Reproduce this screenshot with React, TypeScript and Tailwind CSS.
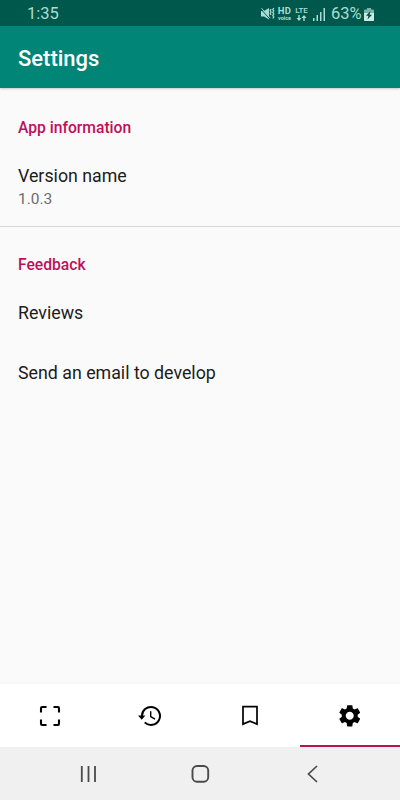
import React from "react";

function ScanIcon() {
  return (
    <svg width="24" height="24" viewBox="0 0 24 24" fill="none" stroke="currentColor" strokeWidth="2.1">
      <path d="M3 8.500V4.200Q3 3 4.200 3H8.500M15.500 3h4.300Q21 3 21 4.200V8.500M21 15.500v4.300Q21 21 19.800 21H15.500M8.500 21H4.200Q3 21 3 19.800V15.500" />
    </svg>
  );
}

function HistoryIcon() {
  return (
    <svg className="-ml-[2px]" width="26" height="24" viewBox="0 0 26 24" fill="none" stroke="currentColor">
      <path d="M6 12.500A9 9 0 1 1 8.700 18.400" strokeWidth="2" />
      <path d="M2 11.600h7.400L5.700 15.800z" fill="currentColor" stroke="none" />
      <path d="M14.700 7.300v5.200l4.300 2.700" strokeWidth="1.400" />
    </svg>
  );
}

function BookmarkIcon() {
  return (
    <svg width="24" height="24" viewBox="0 0 24 24" fill="none" stroke="currentColor" strokeWidth="1.7">
      <path d="M5 2.700h14v17.400l-7-3-7 3z" />
    </svg>
  );
}

function GearIcon() {
  return (
    <svg width="25.500" height="25.500" viewBox="0 0 24 24" fill="currentColor">
      <path d="M19.430 12.980c.04-.32.07-.64.07-.98s-.03-.66-.07-.98l2.110-1.650c.19-.15.24-.42.12-.64l-2-3.460c-.12-.22-.39-.3-.61-.22l-2.490 1c-.52-.4-1.080-.73-1.690-.98l-.38-2.650C14.460 2.180 14.250 2 14 2h-4c-.25 0-.46.18-.49.42l-.38 2.650c-.61.25-1.170.59-1.690.98l-2.490-1c-.23-.09-.49 0-.61.22l-2 3.460c-.13.22-.07.49.12.64l2.110 1.650c-.04.32-.07.65-.07.98s.03.66.07.98l-2.110 1.650c-.19.15-.24.42-.12.64l2 3.460c.12.22.39.3.61.22l2.490-1c.52.4 1.080.73 1.690.98l.38 2.650c.03.24.24.42.49.42h4c.25 0 .46-.18.49-.42l.38-2.650c.61-.25 1.170-.59 1.690-.98l2.490 1c.23.09.49 0 .61-.22l2-3.460c.12-.22.07-.49-.12-.64l-2.110-1.650zM12 15.800c-2.100 0-3.800-1.700-3.800-3.800s1.700-3.800 3.800-3.800 3.800 1.700 3.800 3.800-1.700 3.800-3.800 3.800z" />
    </svg>
  );
}

const tabs = [
  { id: "scan", Icon: ScanIcon },
  { id: "history", Icon: HistoryIcon },
  { id: "bookmarks", Icon: BookmarkIcon },
  { id: "settings", Icon: GearIcon },
];

function StatusBar() {
  return (
    <div className="flex h-[26px] shrink-0 items-center bg-[#00574b] pr-[26px] pl-[27px] text-[#a9dcd2]">
      <span className="mt-[3px] text-[16.5px] leading-none">1:35</span>
      <div className="mt-[2px] ml-auto flex items-center">
        <svg width="14" height="14" viewBox="0 0 14 14" fill="currentColor">
          <path d="M0 4h3l5-3v11.500L3 9.500H0z" />
          <path d="M0 2.200l9 10" stroke="#00574b" strokeWidth="1" />
          <path d="M.5 1.200l8.800 10" stroke="currentColor" strokeWidth="1" />
          <path d="M10 2l-.8 1.500.8 1.500-.8 1.500.8 1.500M12.800 1l-1 1.500 1 1.500-1 1.500 1 1.500-1 1.500 1 1.500-1 1.500" fill="none" stroke="currentColor" strokeWidth="1.3" />
        </svg>
        <div className="ml-[2px] flex w-[15px] flex-col items-center">
          <span className="text-[9.5px] leading-[8px] font-bold tracking-[0.4px]">HD</span>
          <span className="text-[5.5px] leading-[6px] font-bold">voice</span>
        </div>
        <div className="ml-[2px] flex w-[15px] flex-col items-center">
          <span className="text-[8px] leading-[8px] font-medium">LTE</span>
          <svg width="11" height="6" viewBox="0 0 11 6" fill="currentColor">
            <path d="M2.300 0h1.400v3H5.500L3 6 .5 3h1.800zM7.300 6h1.400V3h1.800L8 0 5.500 3h1.800z" />
          </svg>
        </div>
        <svg className="ml-[4px]" width="13" height="13" viewBox="0 0 13 13" fill="currentColor">
          <path d="M0 10h1.500v3H0zM3.500 7H5v6H3.500zM7 4h1.500v9H7zM10.500 0H12v13h-1.500z" />
        </svg>
        <span className="ml-[5px] w-[31px] text-[16.500px] leading-none">63%</span>
        <svg className="ml-[2px]" width="10" height="13" viewBox="0 0 10 13">
          <path d="M3 0h4v1.500h2q1 0 1 1V12q0 1-1 1H1q-1 0-1-1V2.500q0-1 1-1h2z" fill="#7fb3a9" />
          <path d="M0 5h10v7q0 1-1 1H1q-1 0-1-1z" fill="#c9ebe5" />
          <path d="M6.500 3L2 7.800h2.500L3.500 11.500 8 6.700H5.500z" fill="#00463c" />
        </svg>
      </div>
    </div>
  );
}

function SystemNav() {
  return (
    <div className="flex h-[53px] shrink-0 items-center justify-center gap-[92px] bg-[#f0f0f0] text-[#4a4a4a]">
      <svg width="20" height="20" viewBox="0 0 20 20" stroke="currentColor" strokeWidth="1.8">
        <path d="M3.800 2v16M10.500 2v16M17 2v16" />
      </svg>
      <svg width="20" height="20" viewBox="0 0 20 20" fill="none" stroke="currentColor" strokeWidth="1.9">
        <rect x="2.500" y="2" width="15.700" height="15.700" rx="4.500" />
      </svg>
      <svg width="20" height="20" viewBox="0 0 20 20" fill="none" stroke="currentColor" strokeWidth="1.700">
        <path d="M15 2L6.500 10l8.500 8" />
      </svg>
    </div>
  );
}

export default function App() {
  return (
    <div className="flex h-[800px] w-[400px] flex-col overflow-hidden bg-[#fafafa] font-['Roboto',sans-serif]">
      <StatusBar />
      <header className="z-10 flex h-[62px] shrink-0 items-center bg-[#008577] pl-[18px] shadow-[0_1px_2px_rgba(0,0,0,0.2)]">
        <h1 className="mt-[4px] text-[22px] leading-none font-medium text-white">Settings</h1>
      </header>
      <main className="flex-1 text-[17.8px] text-[#1c1c1c]">
        <section className="h-[139px] border-b border-[#d8d8d8] px-[18px] pt-[29px]">
          <h2 className="text-[15.65px] leading-[21px] font-medium text-[#bc1059]">App information</h2>
          <p className="mt-[26px] leading-6">Version name</p>
          <p className="text-[15.5px] leading-[22px] text-[#6c6c6c]">1.0.3</p>
        </section>
        <section className="px-[18px] pt-[27px]">
          <h2 className="text-[15.65px] leading-[21px] font-medium text-[#bc1059]">Feedback</h2>
          <p className="mt-[26px] leading-6">Reviews</p>
          <p className="mt-[36px] leading-6">Send an email to develop</p>
        </section>
      </main>
      <nav className="grid h-[63px] shrink-0 grid-cols-4 bg-white shadow-[0_-1px_4px_rgba(0,0,0,0.02)]">
        {tabs.map(({ id, Icon }) => (
          <button
            key={id}
            className={
              id === "settings"
                ? "flex items-center justify-center border-b-2 border-[#bc1059] pt-[3px] text-black"
                : "flex items-center justify-center border-b-2 border-transparent pt-[3px] text-black"
            }
          >
            <Icon />
          </button>
        ))}
      </nav>
      <SystemNav />
    </div>
  );
}
